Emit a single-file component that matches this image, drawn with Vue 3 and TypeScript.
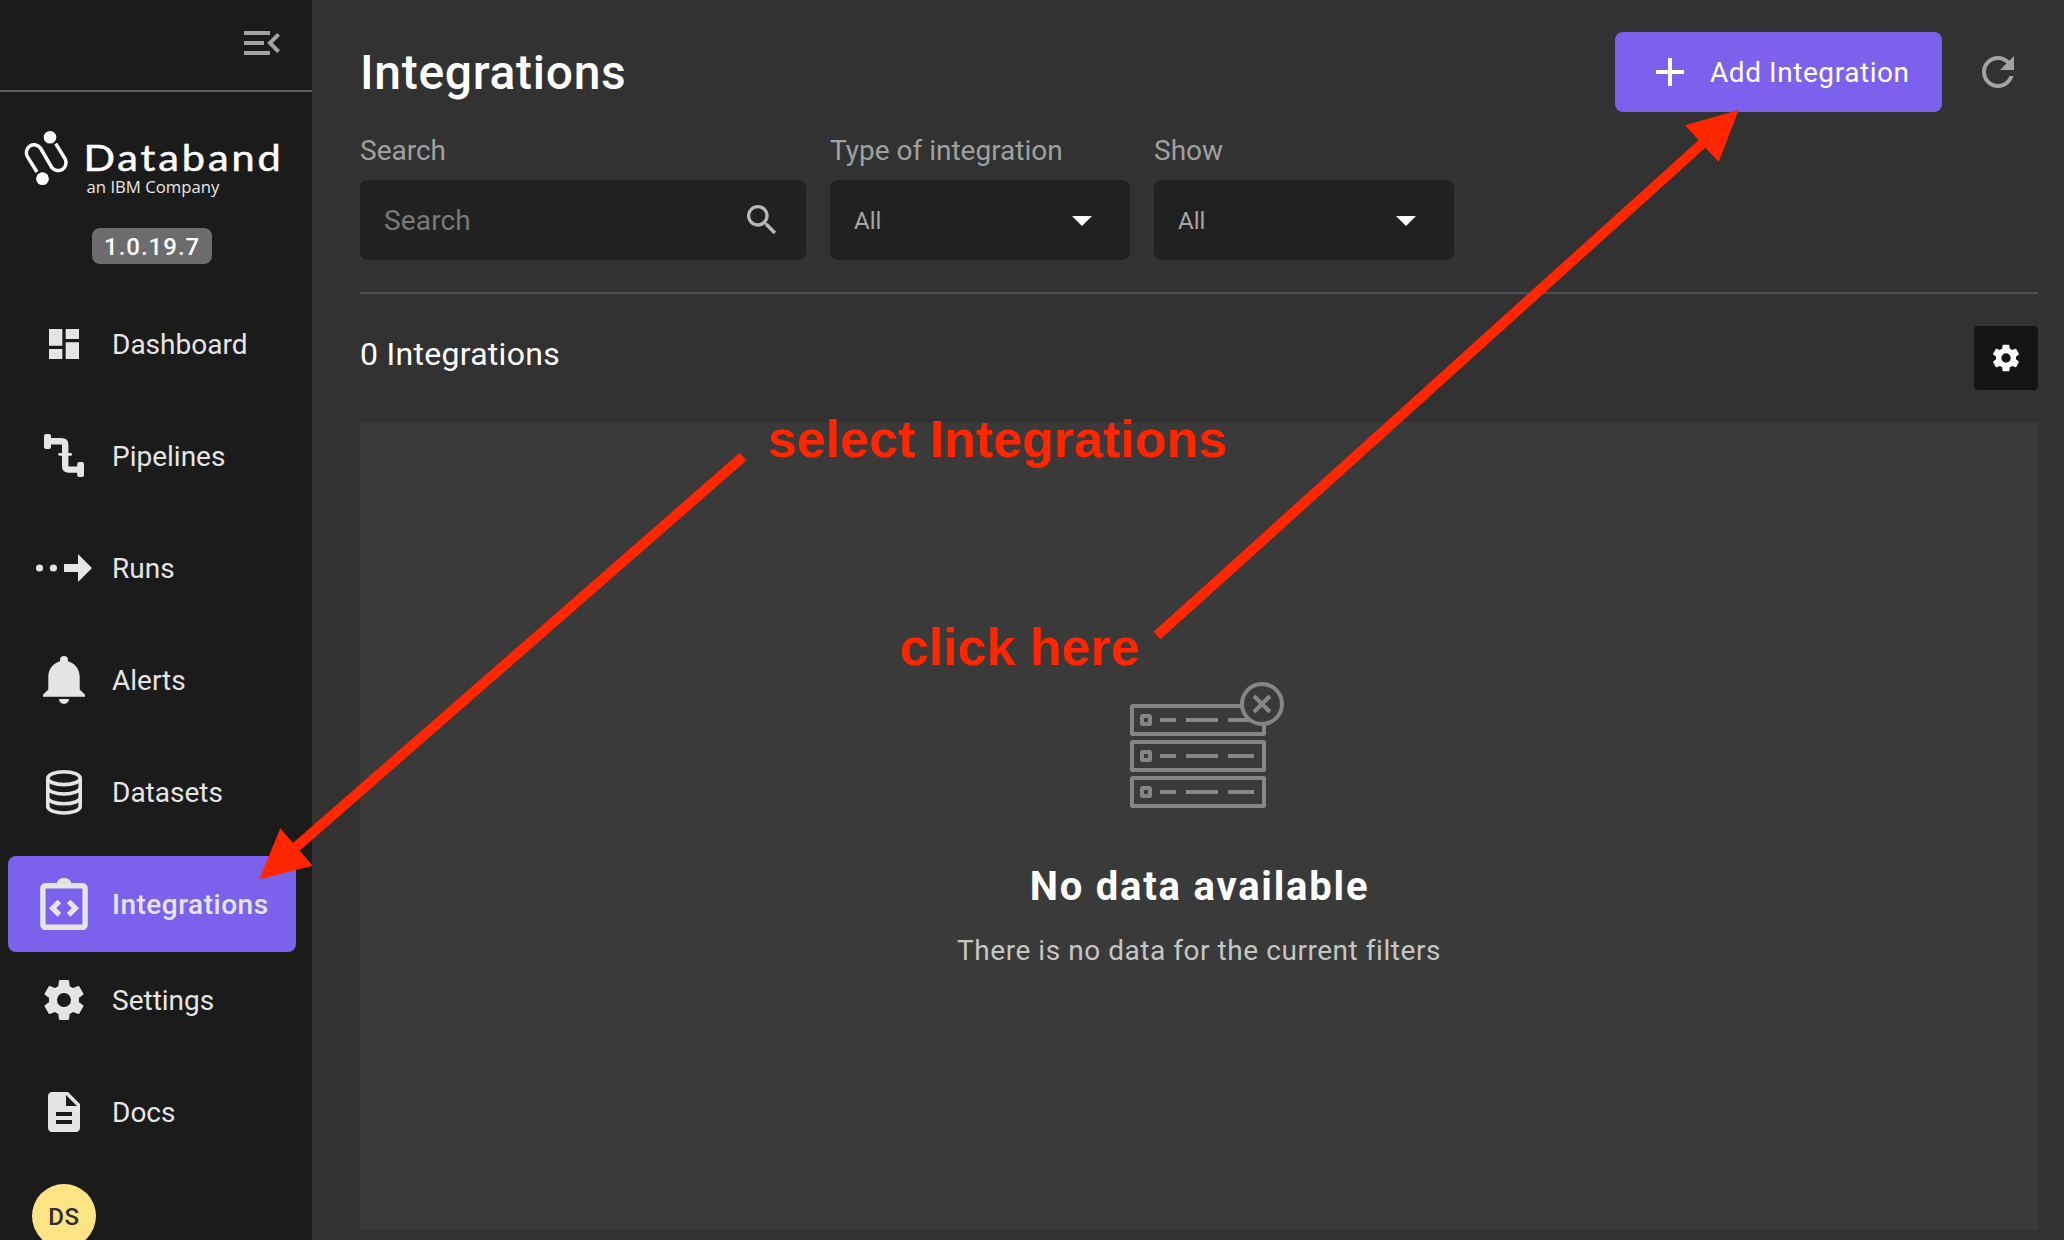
<script setup lang="ts">
interface NavItem {
  id: string
  label: string
  active?: boolean
}

const version = '1.0.19.7'
const userInitials = 'DS'

const navItems: NavItem[] = [
  { id: 'dashboard', label: 'Dashboard' },
  { id: 'pipelines', label: 'Pipelines' },
  { id: 'runs', label: 'Runs' },
  { id: 'alerts', label: 'Alerts' },
  { id: 'datasets', label: 'Datasets' },
  { id: 'integrations', label: 'Integrations', active: true },
  { id: 'settings', label: 'Settings' },
  { id: 'docs', label: 'Docs' },
]

const selects = [
  { id: 'type', label: 'Type of integration', value: 'All' },
  { id: 'show', label: 'Show', value: 'All' },
]

const serverRows = [24, 60, 96]

const cogPath =
  'M12,15.5A3.5,3.5 0 0,1 8.5,12A3.5,3.5 0 0,1 12,8.5A3.5,3.5 0 0,1 15.5,12A3.5,3.5 0 0,1 12,15.5M19.43,12.97C19.47,12.65 19.5,12.33 19.5,12C19.5,11.67 19.47,11.34 19.43,11L21.54,9.37C21.73,9.22 21.78,8.95 21.66,8.73L19.66,5.27C19.54,5.05 19.27,4.96 19.05,5.05L16.56,6.05C16.04,5.66 15.5,5.32 14.87,5.07L14.5,2.42C14.46,2.18 14.25,2 14,2H10C9.75,2 9.54,2.18 9.5,2.42L9.13,5.07C8.5,5.32 7.96,5.66 7.44,6.05L4.95,5.05C4.73,4.96 4.46,5.05 4.34,5.27L2.34,8.73C2.21,8.95 2.27,9.22 2.46,9.37L4.57,11C4.53,11.34 4.5,11.67 4.5,12C4.5,12.33 4.53,12.65 4.57,12.97L2.46,14.63C2.27,14.78 2.21,15.05 2.34,15.27L4.34,18.73C4.46,18.95 4.73,19.03 4.95,18.95L7.44,17.94C7.96,18.34 8.5,18.68 9.13,18.93L9.5,21.58C9.54,21.82 9.75,22 10,22H14C14.25,22 14.46,21.82 14.5,21.58L14.87,18.93C15.5,18.67 16.04,18.34 16.56,17.94L19.05,18.95C19.27,19.03 19.54,18.95 19.66,18.73L21.66,15.27C21.78,15.05 21.73,14.78 21.54,14.63L19.43,12.97Z'
</script>

<template>
  <div class="app">
    <aside class="sidebar">
      <div class="sidebar-top">
        <button class="icon-button collapse" aria-label="Collapse menu">
          <svg width="48" height="48" viewBox="0 0 24 24" fill="currentColor">
            <path d="M3 18h13v-2H3v2zm0-5h10v-2H3v2zm0-7v2h13V6H3zm18 9.59L17.42 12 21 8.41 19.59 7l-5 5 5 5L21 15.59z" />
          </svg>
        </button>
      </div>

      <svg class="logo" width="264" height="76" viewBox="20 126 264 76">
        <circle cx="50" cy="137.2" r="6.3" fill="#fff" />
        <circle cx="42.5" cy="178.7" r="6.4" fill="#fff" />
        <path
          d="M55.7 143.6 L65.4 159.4 A8 8 0 0 1 51.9 167.7 L40.6 148.3 A7.8 7.8 0 0 0 27.4 156.6 L37 172"
          fill="none"
          stroke="#fff"
          stroke-width="3.5"
        />
        <text class="logo-name" x="83.5" y="171" textLength="200" lengthAdjust="spacingAndGlyphs">Databand</text>
        <text class="logo-sub" x="86.5" y="193" textLength="133" lengthAdjust="spacingAndGlyphs">an IBM Company</text>
      </svg>

      <span class="version">{{ version }}</span>

      <nav class="nav">
        <a v-for="item in navItems" :key="item.id" class="nav-item" :class="[item.id, { active: item.active }]">
          <svg class="nav-icon" width="56" height="56" viewBox="0 0 56 56" fill="currentColor">
            <path
              v-if="item.id === 'dashboard'"
              transform="translate(8 8) scale(1.66667)"
              d="M3 13h8V3H3v10zm0 8h8v-6H3v6zm10 0h8V11h-8v10zm0-18v6h8V3h-8z"
            />
            <g v-else-if="item.id === 'pipelines'">
              <rect x="8" y="6" width="7" height="15" rx="2" />
              <rect x="41.2" y="34" width="6.8" height="15" rx="2" />
              <path d="M14 13.3H25.5Q29.2 13.3 29.2 17V38Q29.2 41.6 32.8 41.6H42" fill="none" stroke="currentColor" stroke-width="6.4" />
              <rect x="22.3" y="25" width="13.7" height="2.8" rx="1.2" />
            </g>
            <g v-else-if="item.id === 'runs'">
              <circle cx="3.5" cy="28" r="3.6" />
              <circle cx="17.4" cy="28" r="3.6" />
              <path d="M28 24H42V14L56 28 42 42V32H28z" />
            </g>
            <g v-else-if="item.id === 'alerts'">
              <path d="M28 4a4 4 0 0 1 4 4v1.3c7 1.9 11.7 8.1 11.7 15.5v12.8l5.3 5.2v1.9H7v-1.9l5.3-5.2v-12.8C12.3 17.4 17 11.2 24 9.3V8a4 4 0 0 1 4-4z" />
              <path d="M23 47h10a5 5 0 0 1-10 0z" />
            </g>
            <g v-else-if="item.id === 'datasets'" fill="none" stroke="currentColor" stroke-width="3.6">
              <ellipse cx="28" cy="14.2" rx="16.2" ry="6.4" />
              <path d="M11.8 14.2V42.6A16.2 6.4 0 0 0 44.2 42.6V14.2" />
              <path d="M11.8 23.8A16.2 6.2 0 0 0 44.2 23.8M11.8 33.6A16.2 6.2 0 0 0 44.2 33.6" />
            </g>
            <g v-else-if="item.id === 'integrations'">
              <rect x="6.9" y="9.7" width="42.2" height="41.5" rx="2.5" fill="none" stroke="currentColor" stroke-width="5.4" />
              <path fill-rule="evenodd" d="M20.5 8a7.7 7.7 0 0 1 15 0v4h-15zM28 6.4a2 2 0 1 0 0 4 2 2 0 0 0 0-4z" />
              <path d="M23.3 25.500L16.600 32.200l6.700 6.700M32.700 25.500l6.700 6.700-6.700 6.700" fill="none" stroke="currentColor" stroke-width="5.200" />
            </g>
            <path v-else-if="item.id === 'settings'" transform="translate(4 4) scale(2)" :d="cogPath" />
            <path
              v-else
              transform="translate(4 4) scale(2)"
              d="M14 2H6c-1.1 0-2 .9-2 2v16c0 1.1.9 2 2 2h12c1.1 0 2-.9 2-2V8l-6-6zm2 16H8v-2h8v2zm0-4H8v-2h8v2zm-3-5V3.5L18.5 9H13z"
            />
          </svg>
          <span>{{ item.label }}</span>
        </a>
      </nav>

      <div class="avatar">{{ userInitials }}</div>
    </aside>

    <main class="main">
      <header class="header">
        <h1>Integrations</h1>
        <div class="header-actions">
          <button class="add-button">
            <svg width="48" height="48" viewBox="0 0 24 24" fill="currentColor"><path d="M19 13h-6v6h-2v-6H5v-2h6V5h2v6h6v2z" /></svg>
            <span>Add Integration</span>
          </button>
          <button class="icon-button refresh" aria-label="Refresh">
            <svg width="48" height="48" viewBox="0 0 24 24" fill="currentColor">
              <path d="M17.65 6.35C16.2 4.9 14.21 4 12 4c-4.42 0-7.99 3.58-7.99 8s3.57 8 7.99 8c3.73 0 6.84-2.55 7.73-6h-2.08c-.82 2.33-3.04 4-5.65 4-3.31 0-6-2.69-6-6s2.69-6 6-6c1.66 0 3.14.69 4.22 1.78L13 11h7V4l-2.35 2.35z" />
            </svg>
          </button>
        </div>
      </header>

      <section class="filters">
        <div class="filter search">
          <label>Search</label>
          <div class="field">
            <span class="placeholder">Search</span>
            <svg width="40" height="40" viewBox="0 0 24 24" fill="currentColor">
              <path d="M15.5 14h-.79l-.28-.27C15.41 12.59 16 11.11 16 9.5 16 5.91 13.09 3 9.5 3S3 5.91 3 9.5 5.91 16 9.5 16c1.61 0 3.09-.59 4.23-1.57l.27.28v.79l5 4.99L20.49 19l-4.99-5zm-6 0C7.01 14 5 11.99 5 9.5S7.01 5 9.5 5 14 7.01 14 9.5 11.99 14 9.5 14z" />
            </svg>
          </div>
        </div>
        <div v-for="s in selects" :key="s.id" class="filter select">
          <label>{{ s.label }}</label>
          <div class="field">
            <span class="value">{{ s.value }}</span>
            <svg width="20" height="10" viewBox="0 0 20 10"><path d="M0 0h20L10 10z" fill="#fff" /></svg>
          </div>
        </div>
      </section>

      <section class="toolbar">
        <h2>0 Integrations</h2>
        <button class="config-button" aria-label="Table settings">
          <svg width="32" height="32" viewBox="0 0 24 24" fill="#fff"><path :d="cogPath" /></svg>
        </button>
      </section>

      <section class="empty">
        <svg width="154" height="126" viewBox="0 0 154 126" fill="none" stroke="#868686" stroke-width="4">
          <g v-for="y in serverRows" :key="y">
            <rect x="2" :y="y" width="132" height="28" rx="0.5" />
            <rect x="12" :y="y + 10" width="8" height="8" rx="0.5" />
            <path :d="`M30 ${y + 14}h16M56 ${y + 14}h32M98 ${y + 14}h26`" />
          </g>
          <circle cx="132" cy="22" r="20" fill="#3a3a3a" />
          <path d="M124 14l16 16M140 14l-16 16" />
        </svg>
        <h3>No data available</h3>
        <p>There is no data for the current filters</p>
      </section>
    </main>

    <!-- Walkthrough annotations floating over the page -->
    <div class="annotations">
      <svg width="2064" height="1240" viewBox="0 0 2064 1240" fill="#ff2600" stroke="none">
        <path d="M743 456.7L290 852.3" stroke="#ff2600" stroke-width="10.2" />
        <path d="M259.3 879.3L280.3 828.3 312.7 865.7z" />
        <path d="M1157 635.5L1708 138.5" stroke="#ff2600" stroke-width="10.2" />
        <path d="M1738.7 110L1685 125.3 1718.7 162z" />
      </svg>
      <span class="note note-select">select Integrations</span>
      <span class="note note-click">click here</span>
    </div>
  </div>
</template>

<style>
body {
  background: #323232;
}
</style>

<style scoped>
.app {
  position: relative;
  display: flex;
  height: 1240px;
  overflow: hidden;
  background: #323232;
  font-family: Roboto, 'Liberation Sans', sans-serif;
  color: #fff;
}

h1,
h2,
h3,
p {
  margin: 0;
}

button {
  border: 0;
  padding: 0;
  font: inherit;
  color: inherit;
  background: none;
}

svg {
  display: block;
  flex: none;
}

.sidebar {
  display: flex;
  flex-direction: column;
  flex: none;
  width: 312px;
  box-sizing: border-box;
  background: #1b1b1b;
}

.sidebar-top {
  display: flex;
  justify-content: flex-end;
  align-items: flex-start;
  flex: none;
  height: 92px;
  box-sizing: border-box;
  padding: 19px 26px 0 0;
  border-bottom: 2px solid #5c5c5c;
}

.collapse,
.refresh {
  color: #a3a3a3;
}

.logo {
  margin: 34px 0 0 20px;
}

.logo-name {
  font: 400 36px Lato, sans-serif;
  letter-spacing: 2.5px;
  fill: #fff;
  stroke: #fff;
  stroke-width: 0.5px;
}

.logo-sub {
  font: 400 17px 'Open Sans', sans-serif;
  fill: #e8e8e8;
}

.version {
  flex: none;
  width: 120px;
  height: 36px;
  box-sizing: border-box;
  margin: 26px 0 0 92px;
  padding: 1px 0 0 12px;
  border-radius: 8px;
  background: #6c6c6c;
  font-size: 24px;
  font-weight: 500;
  line-height: 36px;
  letter-spacing: 1px;
}

.nav {
  display: flex;
  flex-direction: column;
  padding: 16px 16px 0 8px;
}

.nav-item {
  display: flex;
  align-items: center;
  height: 96px;
  margin-top: 16px;
  padding-left: 28px;
  gap: 20px;
  border-radius: 8px;
  color: #e5e5e5;
  font-size: 28px;
  line-height: 36px;
}

.nav-item span {
  padding-top: 2px;
}

.nav-item.active {
  background: #7b61eb;
  font-weight: 500;
  letter-spacing: 0.5px;
}

.nav-item.settings {
  margin-top: 0;
}

.avatar {
  flex: none;
  width: 64px;
  height: 64px;
  margin: 24px 0 0 32px;
  border-radius: 50%;
  background: #ffe485;
  color: #2f2f2f;
  font-size: 24px;
  font-weight: 500;
  line-height: 66px;
  letter-spacing: 0.6px;
  text-align: center;
}

.main {
  display: flex;
  flex-direction: column;
  flex: 1;
  padding: 32px 26px 10px 48px;
}

.header {
  display: flex;
  justify-content: space-between;
  align-items: center;
  height: 80px;
}

h1 {
  padding-top: 2px;
  font-size: 48px;
  font-weight: 500;
  line-height: 56px;
  letter-spacing: 0.7px;
}

.header-actions {
  display: flex;
  align-items: center;
  gap: 32px;
  padding-right: 16px;
}

.add-button {
  display: flex;
  align-items: center;
  gap: 16px;
  width: 327px;
  height: 80px;
  padding-left: 31px;
  border-radius: 8px;
  background: #7b61eb;
  font-size: 28px;
  letter-spacing: 0.56px;
}

.filters {
  display: flex;
  gap: 24px;
  margin-top: 21px;
  padding-bottom: 32px;
  border-bottom: 2px solid #505050;
}

.filter label {
  display: block;
  height: 47px;
  font-size: 28px;
  line-height: 36px;
  color: #a0a0a0;
}

.search {
  width: 446px;
}

.select {
  width: 300px;
}

.field {
  display: flex;
  justify-content: space-between;
  align-items: center;
  height: 80px;
  box-sizing: border-box;
  padding: 0 24px;
  border-radius: 8px;
  background: #212121;
  color: #b8b8b8;
}

.select .field {
  padding: 2px 38px 0 24px;
}

.placeholder {
  font-size: 28px;
  letter-spacing: 0.15px;
  color: #7a7a7a;
}

.value {
  font-size: 24px;
  color: #a6a6a6;
}

.toolbar {
  display: flex;
  justify-content: space-between;
  align-items: flex-start;
  height: 64px;
  margin: 32px 0;
}

h2 {
  font-size: 32px;
  font-weight: 400;
  line-height: 56px;
  letter-spacing: 0.28px;
}

.config-button {
  display: flex;
  align-items: center;
  justify-content: center;
  width: 64px;
  height: 64px;
  border-radius: 4px;
  background: #141414;
}

.empty {
  display: flex;
  flex-direction: column;
  align-items: center;
  flex: 1;
  box-sizing: border-box;
  padding-top: 260px;
  background: #3a3a3a;
}

.empty > svg {
  margin-left: 16px;
}

h3 {
  margin-top: 55px;
  padding-left: 1px;
  font-size: 40px;
  font-weight: 700;
  line-height: 48px;
  letter-spacing: 1.78px;
}

p {
  margin-top: 22px;
  font-size: 28px;
  line-height: 36px;
  letter-spacing: 0.55px;
  color: #c6c6c6;
}

.annotations {
  position: absolute;
  inset: 0;
  pointer-events: none;
}

.note {
  position: absolute;
  font: 700 52px/60px 'Liberation Sans', Arial, sans-serif;
  color: #ff2600;
  white-space: nowrap;
}

.note-select {
  left: 768px;
  top: 409px;
}

.note-click {
  left: 900px;
  top: 617px;
}
</style>
